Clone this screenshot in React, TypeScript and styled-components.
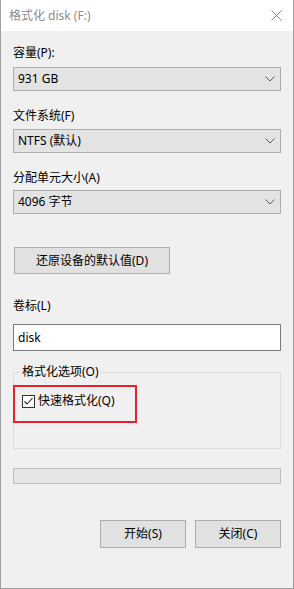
import React, { useState } from "react";
import styled, { createGlobalStyle } from "styled-components";

const GlobalStyle = createGlobalStyle`
  html, body {
    margin: 0;
    padding: 0;
    background: #f0f0f0;
  }
  * {
    box-sizing: border-box;
  }
`;

const font = `"Noto Sans", "Noto Sans CJK SC", sans-serif`;

const Window = styled.div`
  width: 294px;
  height: 589px;
  display: flex;
  flex-direction: column;
  background: #f0f0f0;
  border: 1px solid #a0a0a0;
  border-top: none;
  font-family: ${font};
  font-size: 12px;
  color: #000;
`;

const TitleBar = styled.div`
  height: 31px;
  flex: none;
  display: flex;
  align-items: center;
  justify-content: space-between;
  background: #fff;
  padding: 0 9px 0 8px;
`;

const Title = styled.span`
  color: #8c8c8c;
  font-size: 12px;
  line-height: 16px;
`;

const CloseButton = styled.button`
  width: 16px;
  height: 16px;
  padding: 0;
  border: none;
  background: none;
  display: flex;
  align-items: center;
  justify-content: center;
`;

const Body = styled.div`
  flex: 1;
  display: flex;
  flex-direction: column;
  padding: 13px 12px 0 12px;
`;

const Field = styled.div<{ $gap?: number }>`
  display: flex;
  flex-direction: column;
  margin-top: ${(p) => p.$gap ?? 0}px;
`;

const Label = styled.label<{ $space?: number }>`
  line-height: 17px;
  height: 17px;
  margin-bottom: ${(p) => p.$space ?? 5}px;
  white-space: nowrap;
`;

const Select = styled.div`
  height: 24px;
  display: flex;
  align-items: center;
  justify-content: space-between;
  padding: 0 5px 0 4px;
  background: #e3e3e3;
  border: 1px solid #adadad;
  line-height: 16px;
`;

const Chevron = () => (
  <svg width="10" height="6" viewBox="0 0 10 6">
    <path d="M0.5 0.5 L5 5 L9.5 0.5" fill="none" stroke="#5a5a5a" strokeWidth="1" />
  </svg>
);

const Button = styled.button<{ $width: number }>`
  width: ${(p) => p.$width}px;
  height: 28px;
  padding: 0;
  background: #e1e1e1;
  border: 1px solid #adadad;
  font-family: ${font};
  font-size: 12px;
  color: #000;
  line-height: 16px;
`;

const ResetButton = styled(Button)`
  height: 27px;
  margin: 33px 0 0 1px;
`;

const TextInput = styled.input`
  height: 27px;
  border: 1px solid #7a7a7a;
  background: #fff;
  padding: 0 4px;
  font-family: ${font};
  font-size: 12px;
  color: #000;
  outline: none;
`;

const GroupBox = styled.fieldset`
  position: relative;
  margin: 13px 0 0 0;
  padding: 13px 8px 0 8px;
  height: 85px;
  border: 1px solid #dcdcdc;
  min-width: 0;
`;

const Legend = styled.legend`
  padding: 0 1px;
  margin-left: -1px;
  line-height: 16px;
`;

const CheckRow = styled.label`
  display: flex;
  align-items: center;
  gap: 3px;
  line-height: 16px;
`;

const CheckBox = styled.span`
  width: 13px;
  height: 13px;
  border: 1px solid #333;
  background: #fff;
  display: flex;
  align-items: center;
  justify-content: center;
`;

const Highlight = styled.div`
  position: absolute;
  left: -1px;
  top: 5px;
  width: 124px;
  height: 38px;
  border: 2px solid #e8212b;
  pointer-events: none;
`;

const Progress = styled.div`
  margin-top: 19px;
  height: 16px;
  background: #e6e6e6;
  border: 1px solid #bcbcbc;
`;

const Actions = styled.div`
  margin-top: 36px;
  display: flex;
  justify-content: flex-end;
  gap: 9px;
`;

export default function App() {
  const [quick, setQuick] = useState(true);
  const [label, setLabel] = useState("disk");

  return (
    <>
      <GlobalStyle />
      <Window>
        <TitleBar>
          <Title>格式化 disk (F:)</Title>
          <CloseButton aria-label="关闭">
            <svg width="11" height="11" viewBox="0 0 11 11">
              <path d="M0.5 0.5 L10.5 10.5 M10.5 0.5 L0.5 10.5" stroke="#8a8a8a" strokeWidth="1" />
            </svg>
          </CloseButton>
        </TitleBar>
        <Body>
          <Field>
            <Label $space={6}>容量(P):</Label>
            <Select>
              <span>931 GB</span>
              <Chevron />
            </Select>
          </Field>
          <Field $gap={16}>
            <Label>文件系统(F)</Label>
            <Select>
              <span>NTFS (默认)</span>
              <Chevron />
            </Select>
          </Field>
          <Field $gap={16}>
            <Label $space={4}>分配单元大小(A)</Label>
            <Select>
              <span>4096 字节</span>
              <Chevron />
            </Select>
          </Field>
          <div>
            <ResetButton $width={156}>还原设备的默认值(D)</ResetButton>
          </div>
          <Field $gap={23}>
            <Label $space={10}>卷标(L)</Label>
            <TextInput value={label} onChange={(e) => setLabel(e.target.value)} />
          </Field>
          <GroupBox>
            <Legend>格式化选项(O)</Legend>
            <CheckRow onClick={() => setQuick(!quick)}>
              <CheckBox>
                {quick && (
                  <svg width="11" height="11" viewBox="0 0 11 11">
                    <path d="M1.5 5.5 L4 8 L9.5 2" fill="none" stroke="#222" strokeWidth="1.1" />
                  </svg>
                )}
              </CheckBox>
              <span>快速格式化(Q)</span>
            </CheckRow>
            <Highlight />
          </GroupBox>
          <Progress />
          <Actions>
            <Button $width={86}>开始(S)</Button>
            <Button $width={86}>关闭(C)</Button>
          </Actions>
        </Body>
      </Window>
    </>
  );
}
